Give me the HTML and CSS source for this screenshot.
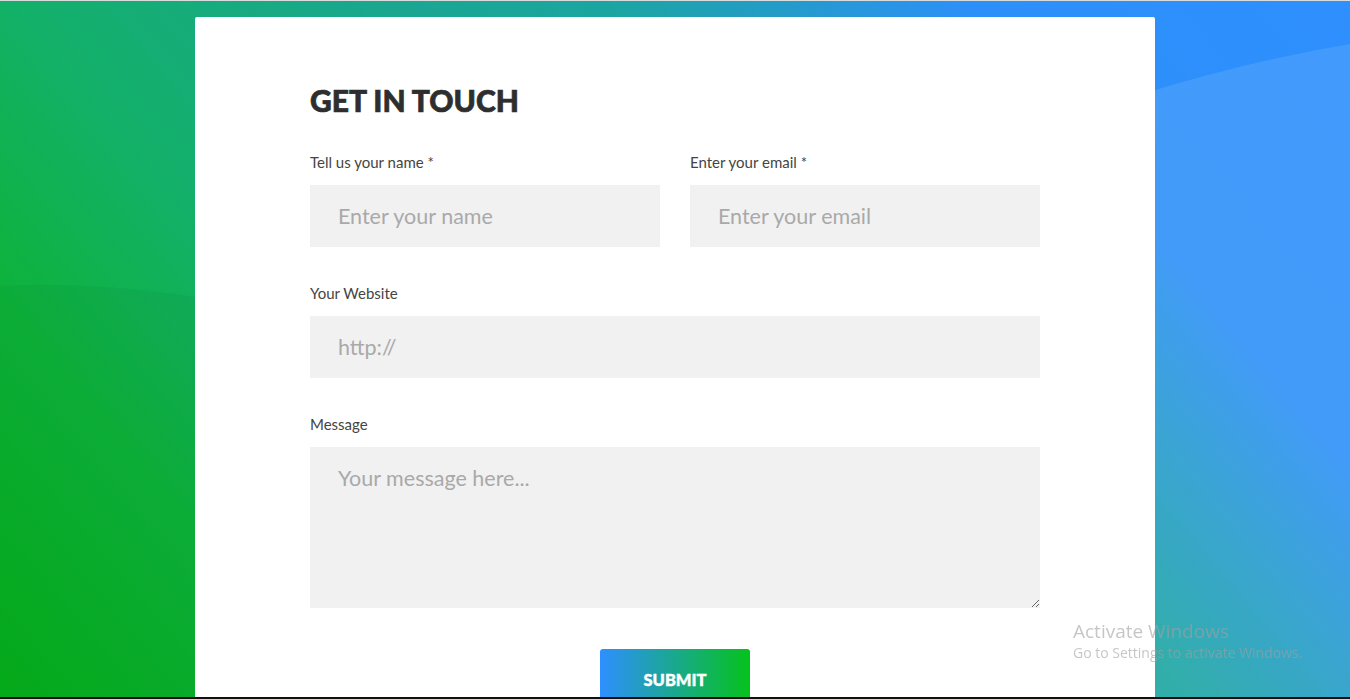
FILE: index.html
```html
<!DOCTYPE html>
<html lang="en">
<head>
<meta charset="utf-8">
<title>Get in touch</title>
<link rel="stylesheet" href="styles.css">
</head>
<body>
<div class="page">
  <svg class="bg-waves" viewBox="0 0 1350 699" preserveAspectRatio="none" aria-hidden="true">
    <path d="M0,278 Q120,272 260,300 L260,699 L0,699 Z" fill="#000" fill-opacity="0.035"/>
    <path d="M1000,140 Q1180,70 1350,42 L1350,699 L1000,699 Z" fill="#fff" fill-opacity="0.1"/>
  </svg>
  <main class="card">
    <h1 class="title">GET IN TOUCH</h1>
    <form class="form">
      <div class="row">
        <div class="group">
          <label class="label" for="name">Tell us your name *</label>
          <input class="field" id="name" type="text" placeholder="Enter your name">
        </div>
        <div class="group">
          <label class="label" for="email">Enter your email *</label>
          <input class="field" id="email" type="email" placeholder="Enter your email">
        </div>
      </div>
      <div class="group">
        <label class="label" for="site">Your Website</label>
        <input class="field" id="site" type="text" placeholder="http://">
      </div>
      <div class="group">
        <label class="label" for="msg">Message</label>
        <textarea class="field area" id="msg" placeholder="Your message here..."></textarea>
      </div>
      <div class="actions">
        <button class="submit" type="button">SUBMIT</button>
      </div>
    </form>
  </main>
</div>
<div class="watermark">
  <div class="wm-title">Activate Windows</div>
  <div class="wm-sub">Go to Settings to activate Windows.</div>
</div>
<div class="taskbar-edge"></div>
</body>
</html>
```

FILE: styles.css
```css
* { box-sizing: border-box; }
html, body { margin: 0; padding: 0; }
body {
  font-family: "Lato", "Liberation Sans", sans-serif;
  overflow: hidden;
  height: 699px;
}
.page {
  position: relative;
  min-height: 699px;
  border-top: 1px solid #d8dcdc;
  background: linear-gradient(50deg, #05b018 0%, #0db33a 18%, #13b06a 32%, #1aa78f 50%, #1ba5a2 62%, #259ad0 72%, #2d90f8 80%, #2e8ffe 100%);
  display: flex;
  justify-content: center;
  padding-top: 16px;
}
.bg-waves {
  position: absolute;
  left: 0; top: 0;
  width: 100%; height: 100%;
}
.card {
  position: relative;
  width: 960px;
  background: #fff;
  border-radius: 2px 2px 0 0;
  padding: 65px 115px 0;
  min-height: 700px;
}
.title {
  margin: 0 0 33px;
  font-size: 30px;
  line-height: 36px;
  font-weight: 900;
  color: #2e2e2e;
  -webkit-text-stroke: 0.7px #2e2e2e;
  letter-spacing: 0;
}
.form { display: flex; flex-direction: column; }
.row { display: flex; gap: 30px; }
.row .group { flex: 1; }
.group { margin-bottom: 35px; }
.label {
  display: block;
  font-size: 15px;
  line-height: 22px;
  color: #444;
  margin-bottom: 12px;
}
.field {
  display: block;
  width: 100%;
  height: 62px;
  border: 0;
  outline: 0;
  background: #f1f1f1;
  padding: 0 28px;
  font-family: "Lato", "Liberation Sans", sans-serif;
  font-size: 21.5px;
  color: #555;
}
.field::placeholder { color: #a9a9a9; }
.area {
  height: 161px;
  padding-top: 17px;
  resize: vertical;
  line-height: 28px;
}
.actions {
  display: flex;
  justify-content: center;
  padding-top: 6px;
}
.submit {
  width: 150px;
  height: 60px;
  padding-top: 2px;
  border: 0;
  border-radius: 3px;
  background: linear-gradient(to right, #2e8ffe, #05c21c);
  color: #fff;
  font-family: "Lato", "Liberation Sans", sans-serif;
  font-weight: 900;
  font-size: 16.5px;
  -webkit-text-stroke: 0.4px #fff;
  letter-spacing: 0;
  cursor: pointer;
}
.watermark {
  position: fixed;
  left: 1073px;
  top: 619px;
  font-family: "Open Sans", "Noto Sans", sans-serif;
  color: rgba(160, 160, 160, 0.6);
  pointer-events: none;
}
.wm-title { font-size: 19px; line-height: 24px; }
.wm-sub { font-size: 14px; line-height: 20px; }
.taskbar-edge {
  position: fixed;
  left: 0; right: 0; bottom: 0;
  height: 2px;
  background: #111;
}
```
